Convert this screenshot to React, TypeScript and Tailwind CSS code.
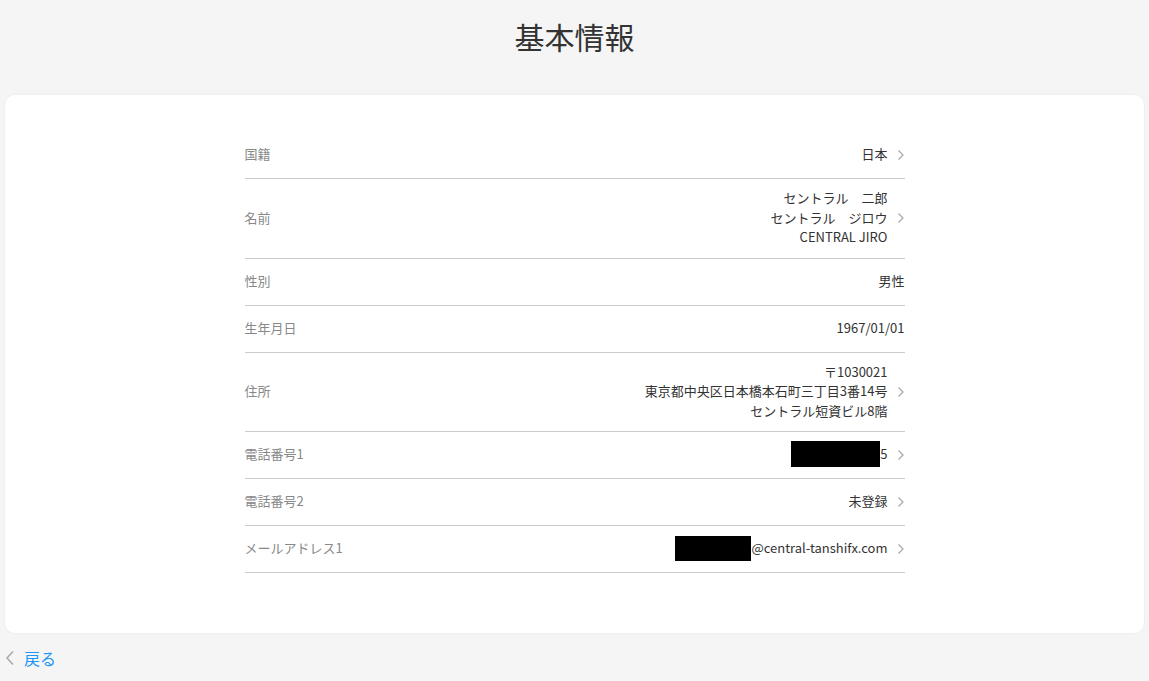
import React from "react";

const font = { fontFamily: '"Noto Sans CJK JP", "Noto Sans", sans-serif' };

function Chevron({ className = "" }: { className?: string }) {
  return (
    <svg width="8" height="12" viewBox="0 0 8 12" className={className}>
      <path d="M1.5 1.5 L6 6 L1.5 10.5" fill="none" stroke="#aaaaaa" strokeWidth="1.3" />
    </svg>
  );
}

type Row = { label: string; value: React.ReactNode; arrow: boolean };

const rows: Row[] = [
  { label: "国籍", value: "日本", arrow: true },
  {
    label: "名前",
    value: (
      <div className="flex flex-col items-end">
        <span>セントラル　二郎</span>
        <span>セントラル　ジロウ</span>
        <span>CENTRAL JIRO</span>
      </div>
    ),
    arrow: true,
  },
  { label: "性別", value: "男性", arrow: false },
  { label: "生年月日", value: "1967/01/01", arrow: false },
  {
    label: "住所",
    value: (
      <div className="flex flex-col items-end">
        <span>〒1030021</span>
        <span>東京都中央区日本橋本石町三丁目3番14号</span>
        <span>セントラル短資ビル8階</span>
      </div>
    ),
    arrow: true,
  },
  {
    label: "電話番号1",
    value: (
      <div className="flex items-center">
        <div className="w-[89px] h-[26px] bg-black" />
        <span>5</span>
      </div>
    ),
    arrow: true,
  },
  { label: "電話番号2", value: "未登録", arrow: true },
  {
    label: "メールアドレス1",
    value: (
      <div className="flex items-center">
        <div className="w-[76px] h-[25px] bg-black" />
        <span>@central-tanshifx.com</span>
      </div>
    ),
    arrow: true,
  },
];

export default function App() {
  return (
    <div className="min-h-[681px] bg-[#f5f5f5]" style={font}>
      <div className="h-[95px] flex justify-center pt-[13px]">
        <h1 className="text-[30px] leading-[46px] text-[#333333]">基本情報</h1>
      </div>
      <div className="mx-[5px] bg-white rounded-[10px] shadow-[0_0_3px_rgba(0,0,0,0.06)] pt-[37px] pb-[60px]">
        <div className="w-[660px] mx-auto">
          {rows.map((r) => (
            <div
              key={r.label}
              className="flex items-center justify-between min-h-[47px] pt-[9px] pb-[11px] border-b border-[#cccccc] text-[13px] leading-[19.5px]"
            >
              <span className="text-[#888888]">{r.label}</span>
              <div className="flex items-center text-[#333333] text-right">
                {r.value}
                {r.arrow && <Chevron className="ml-[9px] mt-[2px]" />}
              </div>
            </div>
          ))}
        </div>
      </div>
      <div className="flex items-center pl-[5px] mt-[13px]">
        <svg width="10" height="16" viewBox="0 0 10 16">
          <path d="M8 1.5 L2 8 L8 14.5" fill="none" stroke="#aaaaaa" strokeWidth="1.5" />
        </svg>
        <span className="ml-[9px] text-[16px] leading-[24px] text-[#2196f3]">戻る</span>
      </div>
    </div>
  );
}
